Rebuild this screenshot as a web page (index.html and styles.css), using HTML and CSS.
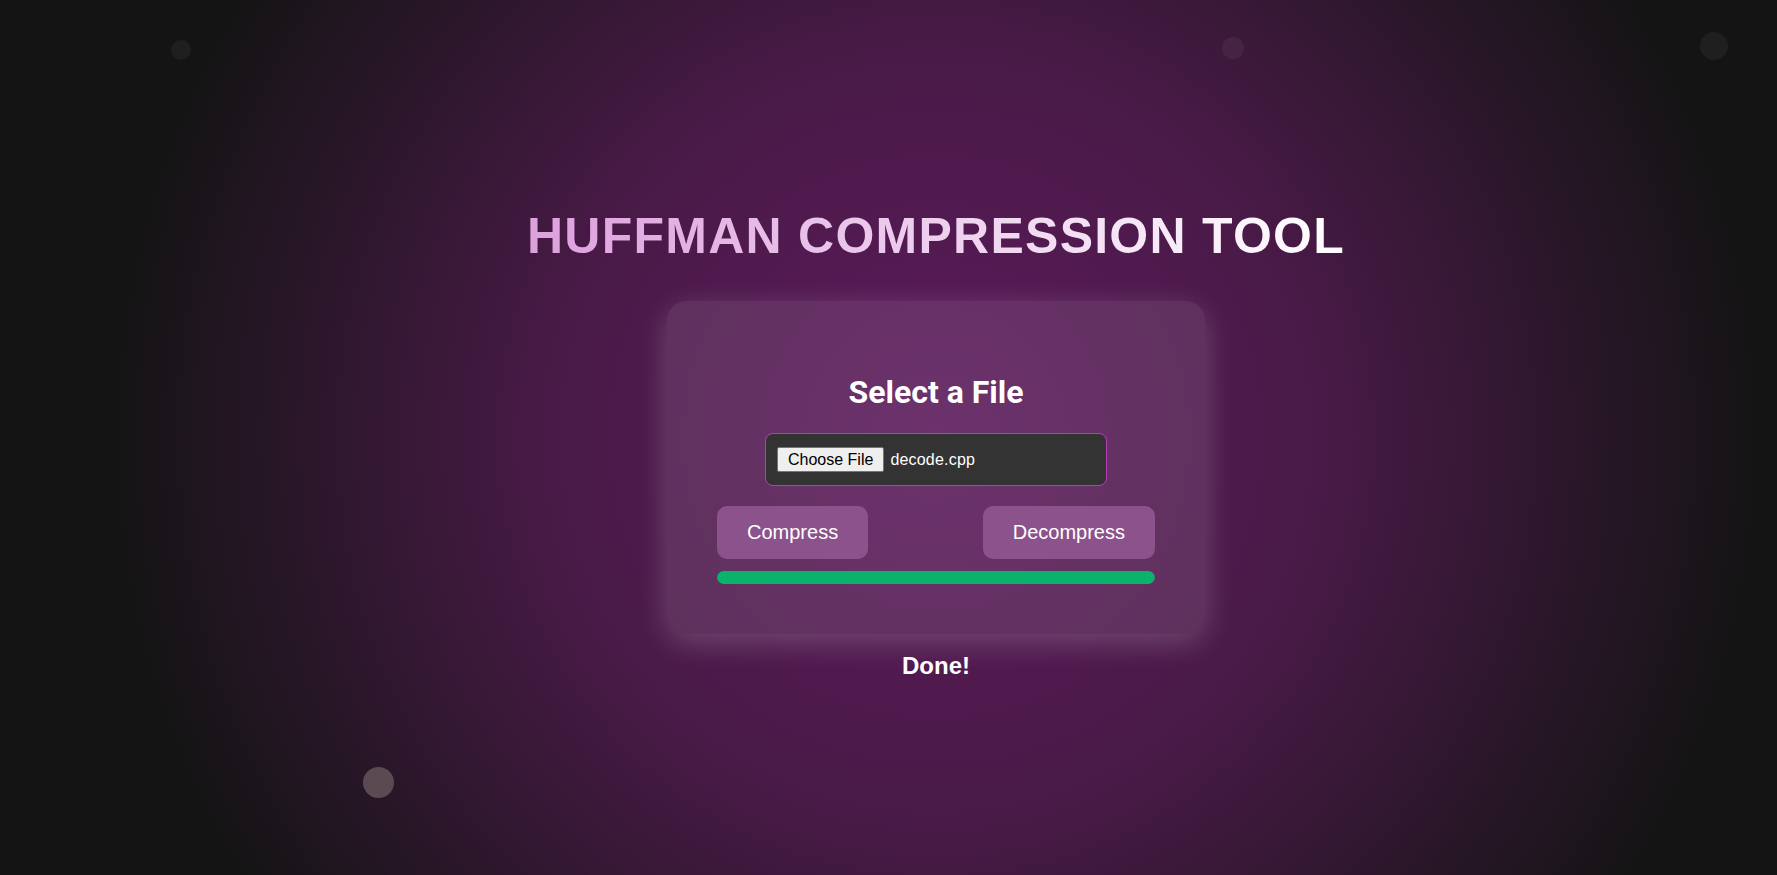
FILE: index.html
```html
<!DOCTYPE html>
<html lang="en">
<head>
<meta charset="utf-8">
<title>Huffman Compression Tool</title>
<link rel="stylesheet" href="styles.css">
</head>
<body>
  <div class="particles" aria-hidden="true">
    <span class="dot dot-1"></span>
    <span class="dot dot-2"></span>
    <span class="dot dot-3"></span>
    <span class="dot dot-4"></span>
  </div>
  <main class="page">
    <h1 class="title">HUFFMAN COMPRESSION TOOL</h1>
    <section class="card">
      <h2 class="card-title">Select a File</h2>
      <label class="file-input">
        <span class="file-btn">Choose File</span>
        <span class="file-name">decode.cpp</span>
      </label>
      <div class="actions">
        <button class="btn" type="button">Compress</button>
        <button class="btn" type="button">Decompress</button>
      </div>
      <div class="progress"><div class="progress-fill" style="width:100%"></div></div>
    </section>
    <p class="status">Done!</p>
  </main>
</body>
</html>
```
FILE: styles.css
```css
html, body {
  margin: 0;
  padding: 0;
}

body {
  min-height: 100vh;
  overflow: hidden;
  font-family: "Liberation Sans", Arial, sans-serif;
  color: #fff;
  background-color: #141414;
  background-image: radial-gradient(circle at 936px 437px, #5d1a5d 0px, #4a1a48 370px, #141414 830px);
}

.particles .dot {
  position: absolute;
  border-radius: 50%;
  background: rgba(255, 255, 255, 0.05);
}

.particles .dot-1 { left: 171px; top: 40px; width: 20px; height: 20px; }
.particles .dot-2 { left: 1222px; top: 37px; width: 22px; height: 22px; }
.particles .dot-3 { left: 1700px; top: 32px; width: 28px; height: 28px; }
.particles .dot-4 { left: 363px; top: 767px; width: 31px; height: 31px; background: #5b4a51; }

.page {
  display: flex;
  flex-direction: column;
  align-items: center;
  padding: 207px 0 0 95px;
}

.title {
  margin: 0 0 36px;
  font-family: "Liberation Sans", Arial, sans-serif;
  font-weight: 700;
  font-size: 50px;
  line-height: 58px;
  letter-spacing: 1.25px;
  background: linear-gradient(90deg, #dda0dd, #ffffff);
  -webkit-background-clip: text;
  background-clip: text;
  color: transparent;
}

.card {
  width: 538px;
  box-sizing: border-box;
  padding: 48px 50px 50px;
  border-radius: 20px;
  background: rgba(255, 255, 255, 0.1);
  box-shadow: 0 8px 30px rgba(255, 255, 255, 0.2);
}

.card-title {
  margin: 25px 0 23px;
  font-family: Roboto, "Liberation Sans", sans-serif;
  font-weight: 700;
  font-size: 32px;
  line-height: 36px;
  text-align: center;
  color: #fff;
}

.file-input {
  display: flex;
  align-items: center;
  width: 342px;
  box-sizing: border-box;
  margin: 0 auto;
  padding: 13px 11px;
  border: 1px solid #b83cb8;
  border-radius: 8px;
  background: #333333;
  font-family: "Liberation Sans", Arial, sans-serif;
  font-size: 16px;
  line-height: 19px;
  color: #fff;
}

.file-btn {
  margin-right: 6px;
  padding: 2px 10px;
  border: 1px solid #767676;
  border-radius: 2px;
  background: #efefef;
  color: #000;
}

.file-name {
  letter-spacing: 0.2px;
}

.actions {
  display: flex;
  justify-content: space-between;
  margin-top: 20px;
}

.btn {
  padding: 15px 30px;
  border: none;
  border-radius: 10px;
  background: #8c528b;
  color: #fff;
  font-family: "Liberation Sans", Arial, sans-serif;
  font-size: 20px;
  line-height: 23px;
}

.progress {
  margin-top: 12px;
  height: 13px;
  border-radius: 7px;
  background: rgba(255, 255, 255, 0.1);
  overflow: hidden;
}

.progress-fill {
  height: 100%;
  border-radius: 7px;
  background: #0ab26b;
}

.status {
  margin: 18px 0 0;
  font-family: "Liberation Sans", Arial, sans-serif;
  font-weight: 700;
  font-size: 24px;
  line-height: 28px;
  color: #fff;
}
```
